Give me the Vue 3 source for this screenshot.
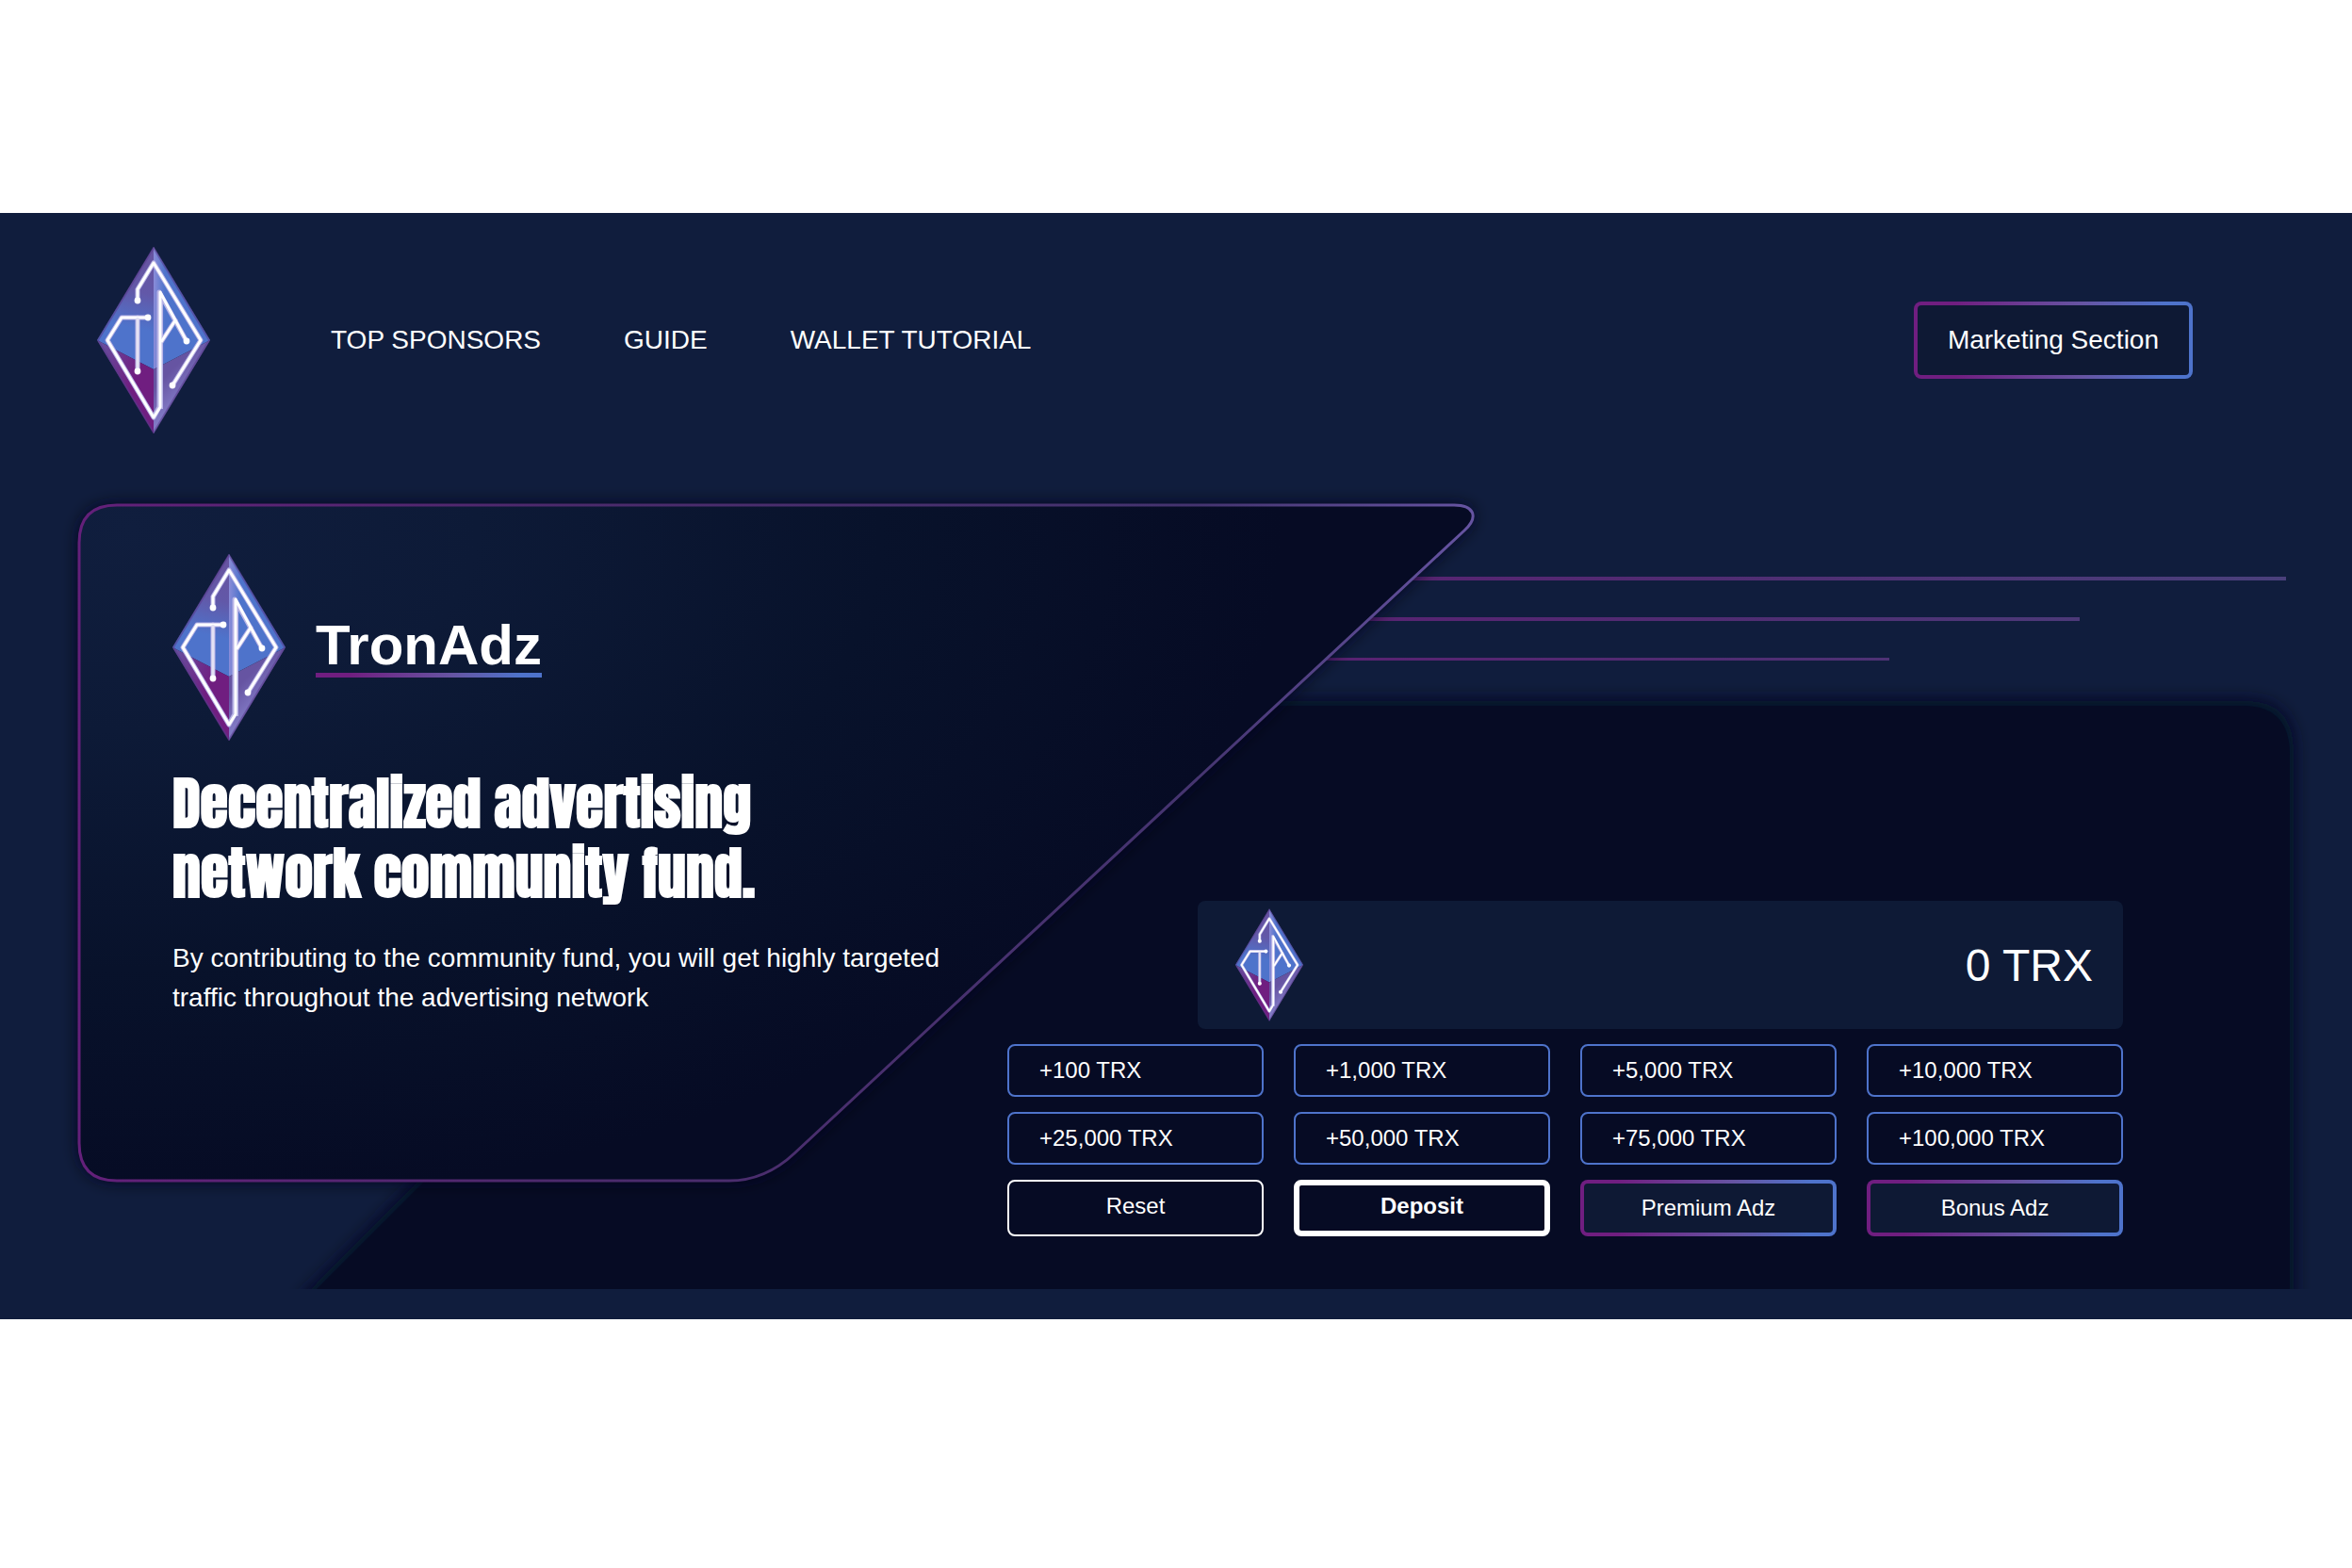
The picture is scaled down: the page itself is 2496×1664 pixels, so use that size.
<script setup>
import { ref } from 'vue'

const total = ref(0)
const amounts = [100, 1000, 5000, 10000, 25000, 50000, 75000, 100000]
const links = ['TOP SPONSORS', 'GUIDE', 'WALLET TUTORIAL']
const format = (n) => n.toLocaleString('en-US')
</script>

<template>
  <div class="page">
    <svg class="sprite" aria-hidden="true">
      <defs>
        <linearGradient id="facet-ul" x1="0.6" y1="0" x2="0.5" y2="1">
          <stop offset="0.1" stop-color="#6654a2" />
          <stop offset="0.35" stop-color="#6258a8" />
          <stop offset="0.65" stop-color="#4e73cb" />
        </linearGradient>
        <linearGradient id="facet-ur" x1="0" y1="0" x2="1" y2="0">
          <stop offset="0" stop-color="#8a8cd8" />
          <stop offset="0.2" stop-color="#4e73cb" />
        </linearGradient>
        <linearGradient id="facet-ll" x1="0" y1="0" x2="0.7" y2="0.5">
          <stop offset="0" stop-color="#6654a2" />
          <stop offset="0.9" stop-color="#701e80" />
        </linearGradient>
        <linearGradient id="facet-lr" x1="0.3" y1="0.2" x2="0.6" y2="0.7">
          <stop offset="0.2" stop-color="#6654a2" />
          <stop offset="1" stop-color="#8a86d0" />
        </linearGradient>
        <symbol id="logo" viewBox="0 0 120 198">
          <path d="M60 0L0 99L60 130Z" fill="url(#facet-ul)" />
          <path d="M60 0L120 99L60 130Z" fill="url(#facet-ur)" />
          <path d="M0 99L60 130V198Z" fill="url(#facet-ll)" />
          <path d="M120 99L60 130V198Z" fill="url(#facet-lr)" />
          <path d="M60 1L1 99L60 197L119 99Z" fill="none" stroke="#5a3a8c" stroke-opacity="0.55" stroke-width="2" />
          <g fill="none" stroke="#b9b4e6" stroke-width="5" stroke-linejoin="round" stroke-linecap="round">
            <path d="M43 57V45L60 17L110 99L80 147" />
            <path d="M54 75H26L11 99L60 181L66 170V48L95 100" />
            <path d="M43 75V132M83 78L68 101" />
          </g>
          <path d="M64 46L70 56V172H66Z" fill="#b9b4e6" />
          <g fill="none" stroke="#fff" stroke-width="3" stroke-linejoin="round">
            <path d="M43 57V45L60 17L110 99L80 147" />
            <path d="M54 75H26L11 99L60 181L67 170V48L95 100" />
            <path d="M83 78L68 101" />
          </g>
          <path d="M43 75V132" stroke="#e4e2f4" stroke-width="3" />
          <g fill="#fff">
            <circle cx="43" cy="57" r="3.4" />
            <circle cx="54" cy="75" r="3.4" />
            <circle cx="43" cy="132" r="3.4" />
            <circle cx="80" cy="147" r="3.4" />
            <circle cx="95" cy="100" r="3.4" />
          </g>
        </symbol>
      </defs>
    </svg>

    <div class="site">
      <header class="header">
        <svg class="logo" role="img" aria-label="TronAdz"><use href="#logo" /></svg>
        <nav class="nav">
          <a v-for="link in links" :key="link" href="#">{{ link }}</a>
        </nav>
        <button class="gradient-button marketing" type="button">Marketing Section</button>
      </header>

      <main class="stage">
        <svg class="backdrop" viewBox="0 0 2496 900" preserveAspectRatio="none" aria-hidden="true">
          <defs>
            <radialGradient
              id="card-fill"
              gradientUnits="userSpaceOnUse"
              cx="0"
              cy="0"
              r="1"
              gradientTransform="translate(140 60) scale(1220 720)"
            >
              <stop offset="0" stop-color="#101e3e" />
              <stop offset="0.3" stop-color="#0d1a37" />
              <stop offset="0.65" stop-color="#08122b" />
              <stop offset="1" stop-color="#060b24" />
            </radialGradient>
            <linearGradient id="card-edge" gradientUnits="userSpaceOnUse" x1="84" y1="0" x2="1564" y2="0">
              <stop offset="0" stop-color="#64207a" />
              <stop offset="0.35" stop-color="#4c2a6c" />
              <stop offset="0.8" stop-color="#453470" />
              <stop offset="1" stop-color="#6654a2" />
            </linearGradient>
            <linearGradient id="streak" gradientUnits="userSpaceOnUse" x1="1400" y1="0" x2="2426" y2="0">
              <stop offset="0" stop-color="#5a2272" />
              <stop offset="0.4" stop-color="#502c72" />
              <stop offset="1" stop-color="#4a407c" />
            </linearGradient>
            <filter id="soft" x="-5%" y="-5%" width="110%" height="110%">
              <feGaussianBlur stdDeviation="9" />
            </filter>
            <clipPath id="floor"><rect width="2496" height="868" /></clipPath>
          </defs>
          <g clip-path="url(#floor)" fill="#060b24">
            <path d="M320 878L948 244H2384Q2434 244 2434 298V960H320Z" filter="url(#soft)" />
            <path d="M336 868L955 249H2380Q2430 249 2430 301V868Z" />
          </g>
          <g fill="url(#streak)">
            <rect x="1490" y="112" width="936" height="4" />
            <rect x="1440" y="155" width="767" height="4" />
            <rect x="1400" y="198" width="605" height="3" />
          </g>
          <path
            d="M84 76Q84 36 124 36H1543C1564 36 1570 48 1554 63L843 724Q812 753 774 753H124Q84 753 84 713Z"
            fill="#03081c"
            filter="url(#soft)"
          />
          <path
            d="M84 76Q84 36 124 36H1543C1564 36 1570 48 1554 63L843 724Q812 753 774 753H124Q84 753 84 713Z"
            fill="url(#card-fill)"
            stroke="url(#card-edge)"
            stroke-width="3"
          />
        </svg>

        <section class="intro">
          <div class="brand">
            <svg class="logo" aria-hidden="true"><use href="#logo" /></svg>
            <h1>TronAdz</h1>
          </div>
          <h2>Decentralized advertising<br />network community fund.</h2>
          <p>By contributing to the community fund, you will get highly targeted traffic throughout the advertising network</p>
        </section>

        <section class="deposit">
          <div class="balance">
            <svg class="logo small" aria-hidden="true"><use href="#logo" /></svg>
            <output>{{ format(total) }} TRX</output>
          </div>
          <div class="buttons">
            <button v-for="n in amounts" :key="n" class="amount" type="button" @click="total += n">
              +{{ format(n) }} TRX
            </button>
            <button class="action" type="button" @click="total = 0">Reset</button>
            <button class="action strong" type="button">Deposit</button>
            <button class="action gradient-button" type="button">Premium Adz</button>
            <button class="action gradient-button" type="button">Bonus Adz</button>
          </div>
        </section>
      </main>
    </div>
  </div>
</template>

<style>
body {
  background: #fff;
}
</style>

<style scoped>
.page {
  padding: 226px 0;
  font-family: Arial, "Liberation Sans", sans-serif;
  font-size: 28px;
  color: #fff;
}
.sprite {
  position: absolute;
  width: 0;
  height: 0;
}
.site {
  background: #101d3d;
}
.logo {
  flex: none;
  width: 120px;
  height: 198px;
}
.logo.small {
  width: 72px;
  height: 120px;
}
.header {
  display: flex;
  align-items: center;
  padding: 36px 169px 40px 103px;
}
.nav {
  display: flex;
  gap: 88px;
  margin-left: 128px;
}
.nav a {
  color: inherit;
  text-decoration: none;
}
button {
  font-family: inherit;
  color: inherit;
  border-radius: 8px;
  cursor: pointer;
}
.gradient-button {
  border: 4px solid transparent;
  background:
    linear-gradient(#0e1934, #0e1934) padding-box,
    linear-gradient(to right, #701e80 15%, #6654a2 60%, #4e73cb 90%) border-box;
}
.marketing {
  height: 82px;
  margin-left: auto;
  padding: 0 32px;
  font-size: 28px;
}
.stage {
  position: relative;
  display: flex;
  justify-content: space-between;
  align-items: flex-end;
  padding: 88px 243px 88px 183px;
}
.backdrop {
  position: absolute;
  inset: 0;
  width: 100%;
  height: 100%;
}
.intro {
  position: relative;
  max-width: 840px;
  padding-bottom: 232px;
}
.brand {
  display: flex;
  align-items: center;
  gap: 32px;
}
h1 {
  margin: 0;
  padding-bottom: 4px;
  font-size: 60px;
  line-height: 60px;
  background: linear-gradient(to right, #701e80 15%, #6654a2 60%, #4e73cb 90%) bottom / 100% 5px no-repeat;
}
h2 {
  margin: 30px 0 32px;
  font-family: Anton, Impact, "Liberation Sans Narrow", sans-serif;
  font-size: 60px;
  font-weight: 700;
  line-height: 74px;
  white-space: nowrap;
}
p {
  margin: 0;
  line-height: 42px;
}
.deposit {
  position: relative;
  display: flex;
  flex-direction: column;
  gap: 16px;
  width: 1184px;
}
.balance {
  display: flex;
  align-items: center;
  justify-content: space-between;
  align-self: flex-end;
  box-sizing: border-box;
  width: 982px;
  padding: 8px 32px 8px 40px;
  border-radius: 8px;
  background: #0e1a36;
  font-size: 48px;
}
.buttons {
  display: grid;
  grid-template-columns: repeat(4, 1fr);
  gap: 16px 32px;
}
.buttons button {
  font-size: 24px;
}
.amount {
  height: 56px;
  padding: 0 32px;
  border: 2px solid #4e73cb;
  background: #060b24;
  text-align: left;
}
.action {
  height: 60px;
  padding: 0 32px;
}
.action:not(.gradient-button) {
  padding-bottom: 4px;
  border: 2px solid #fff;
  background: #060b24;
}
.action.strong {
  border-width: 6px;
  font-weight: 700;
}
</style>
